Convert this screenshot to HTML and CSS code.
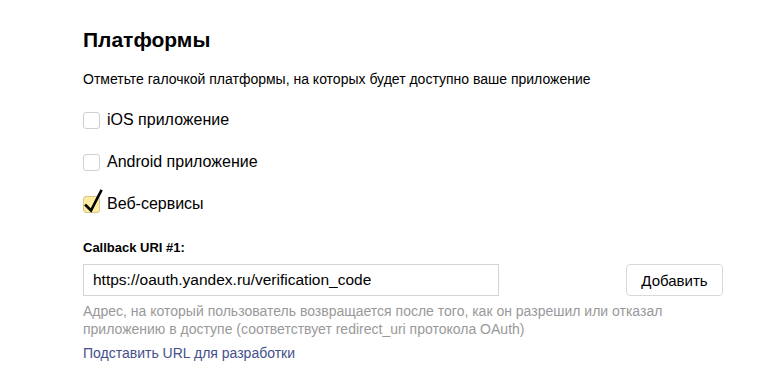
FILE: index.html
```html
<!DOCTYPE html>
<html>
<head>
  <meta charset="utf-8">
  <title>Платформы</title>
  <link rel="stylesheet" href="styles.css">
</head>
<body>
  <div class="section">
    <h2>Платформы</h2>
    <p class="hint">Отметьте галочкой платформы, на которых будет доступно ваше приложение</p>

    <div class="platforms">
      <label class="check">
        <span class="box"></span>
        <span>iOS приложение</span>
      </label>
      <label class="check">
        <span class="box"></span>
        <span>Android приложение</span>
      </label>
      <label class="check checked">
        <span class="box">
          <svg width="22" height="26" viewBox="0 0 22 26"><path d="M3 17.5 L8 22.5 L18 3" fill="none" stroke="#000" stroke-width="2.6" stroke-linecap="square" stroke-linejoin="miter"/></svg>
        </span>
        <span>Веб-сервисы</span>
      </label>
    </div>

    <div class="field">
      <div class="field-label">Callback URI #1:</div>
      <div class="field-row">
        <input class="input" type="text" value="https://oauth.yandex.ru/verification_code">
        <button class="add-button" type="button">Добавить</button>
      </div>
      <div class="field-help">Адрес, на который пользователь возвращается после того, как он разрешил или отказал приложению в доступе (соответствует redirect_uri протокола OAuth)</div>
      <a class="dev-link" href="#">Подставить URL для разработки</a>
    </div>
  </div>
</body>
</html>
```

FILE: styles.css
```css
body {
  margin: 0;
  font-family: "Liberation Sans", Arial, sans-serif;
  color: #000;
  background-color: #fff;
}

.section {
  padding: 27px 0 0 83px;
}

h2 {
  margin: 0;
  font-size: 21px;
  line-height: 26px;
  font-weight: bold;
}

.hint {
  margin: 17px 0 0;
  font-size: 14px;
  line-height: 18px;
}

.platforms {
  margin-top: 23px;
  display: flex;
  flex-direction: column;
  gap: 24px;
}

.check {
  display: flex;
  align-items: center;
  gap: 7px;
  font-size: 16px;
  line-height: 18px;
  height: 18px;
}

.box {
  position: relative;
  box-sizing: border-box;
  width: 17px;
  height: 17px;
  border: 1px solid #d0d0d0;
  border-radius: 3px;
  background-color: #fff;
}

.checked .box {
  background-color: #ffeba0;
  border-color: #d8c88a;
}

/* the tick overflows the box upwards */
.box svg {
  position: absolute;
  left: -1px;
  top: -9px;
}

.field {
  margin-top: 27px;
}

.field-label {
  font-size: 13px;
  font-weight: bold;
  line-height: 16px;
}

.field-row {
  margin-top: 8px;
  display: flex;
  align-items: center;
  gap: 127px;
}

.input {
  box-sizing: border-box;
  width: 416px;
  height: 32px;
  padding: 0 9px;
  border: 1px solid #d4d4d4;
  font-family: inherit;
  font-size: 15.5px;
  color: #000;
  outline: none;
}

.add-button {
  box-sizing: border-box;
  width: 97px;
  height: 32px;
  border: 1px solid #d8d8d8;
  border-radius: 4px;
  background-color: #fff;
  font-family: inherit;
  font-size: 15px;
  color: #000;
}

.field-help {
  margin-top: 6px;
  width: 600px;
  font-size: 14px;
  line-height: 18px;
  color: #999;
}

.dev-link {
  display: block;
  margin-top: 6px;
  font-size: 14px;
  line-height: 18px;
  color: #44508c;
  text-decoration: none;
}
```
